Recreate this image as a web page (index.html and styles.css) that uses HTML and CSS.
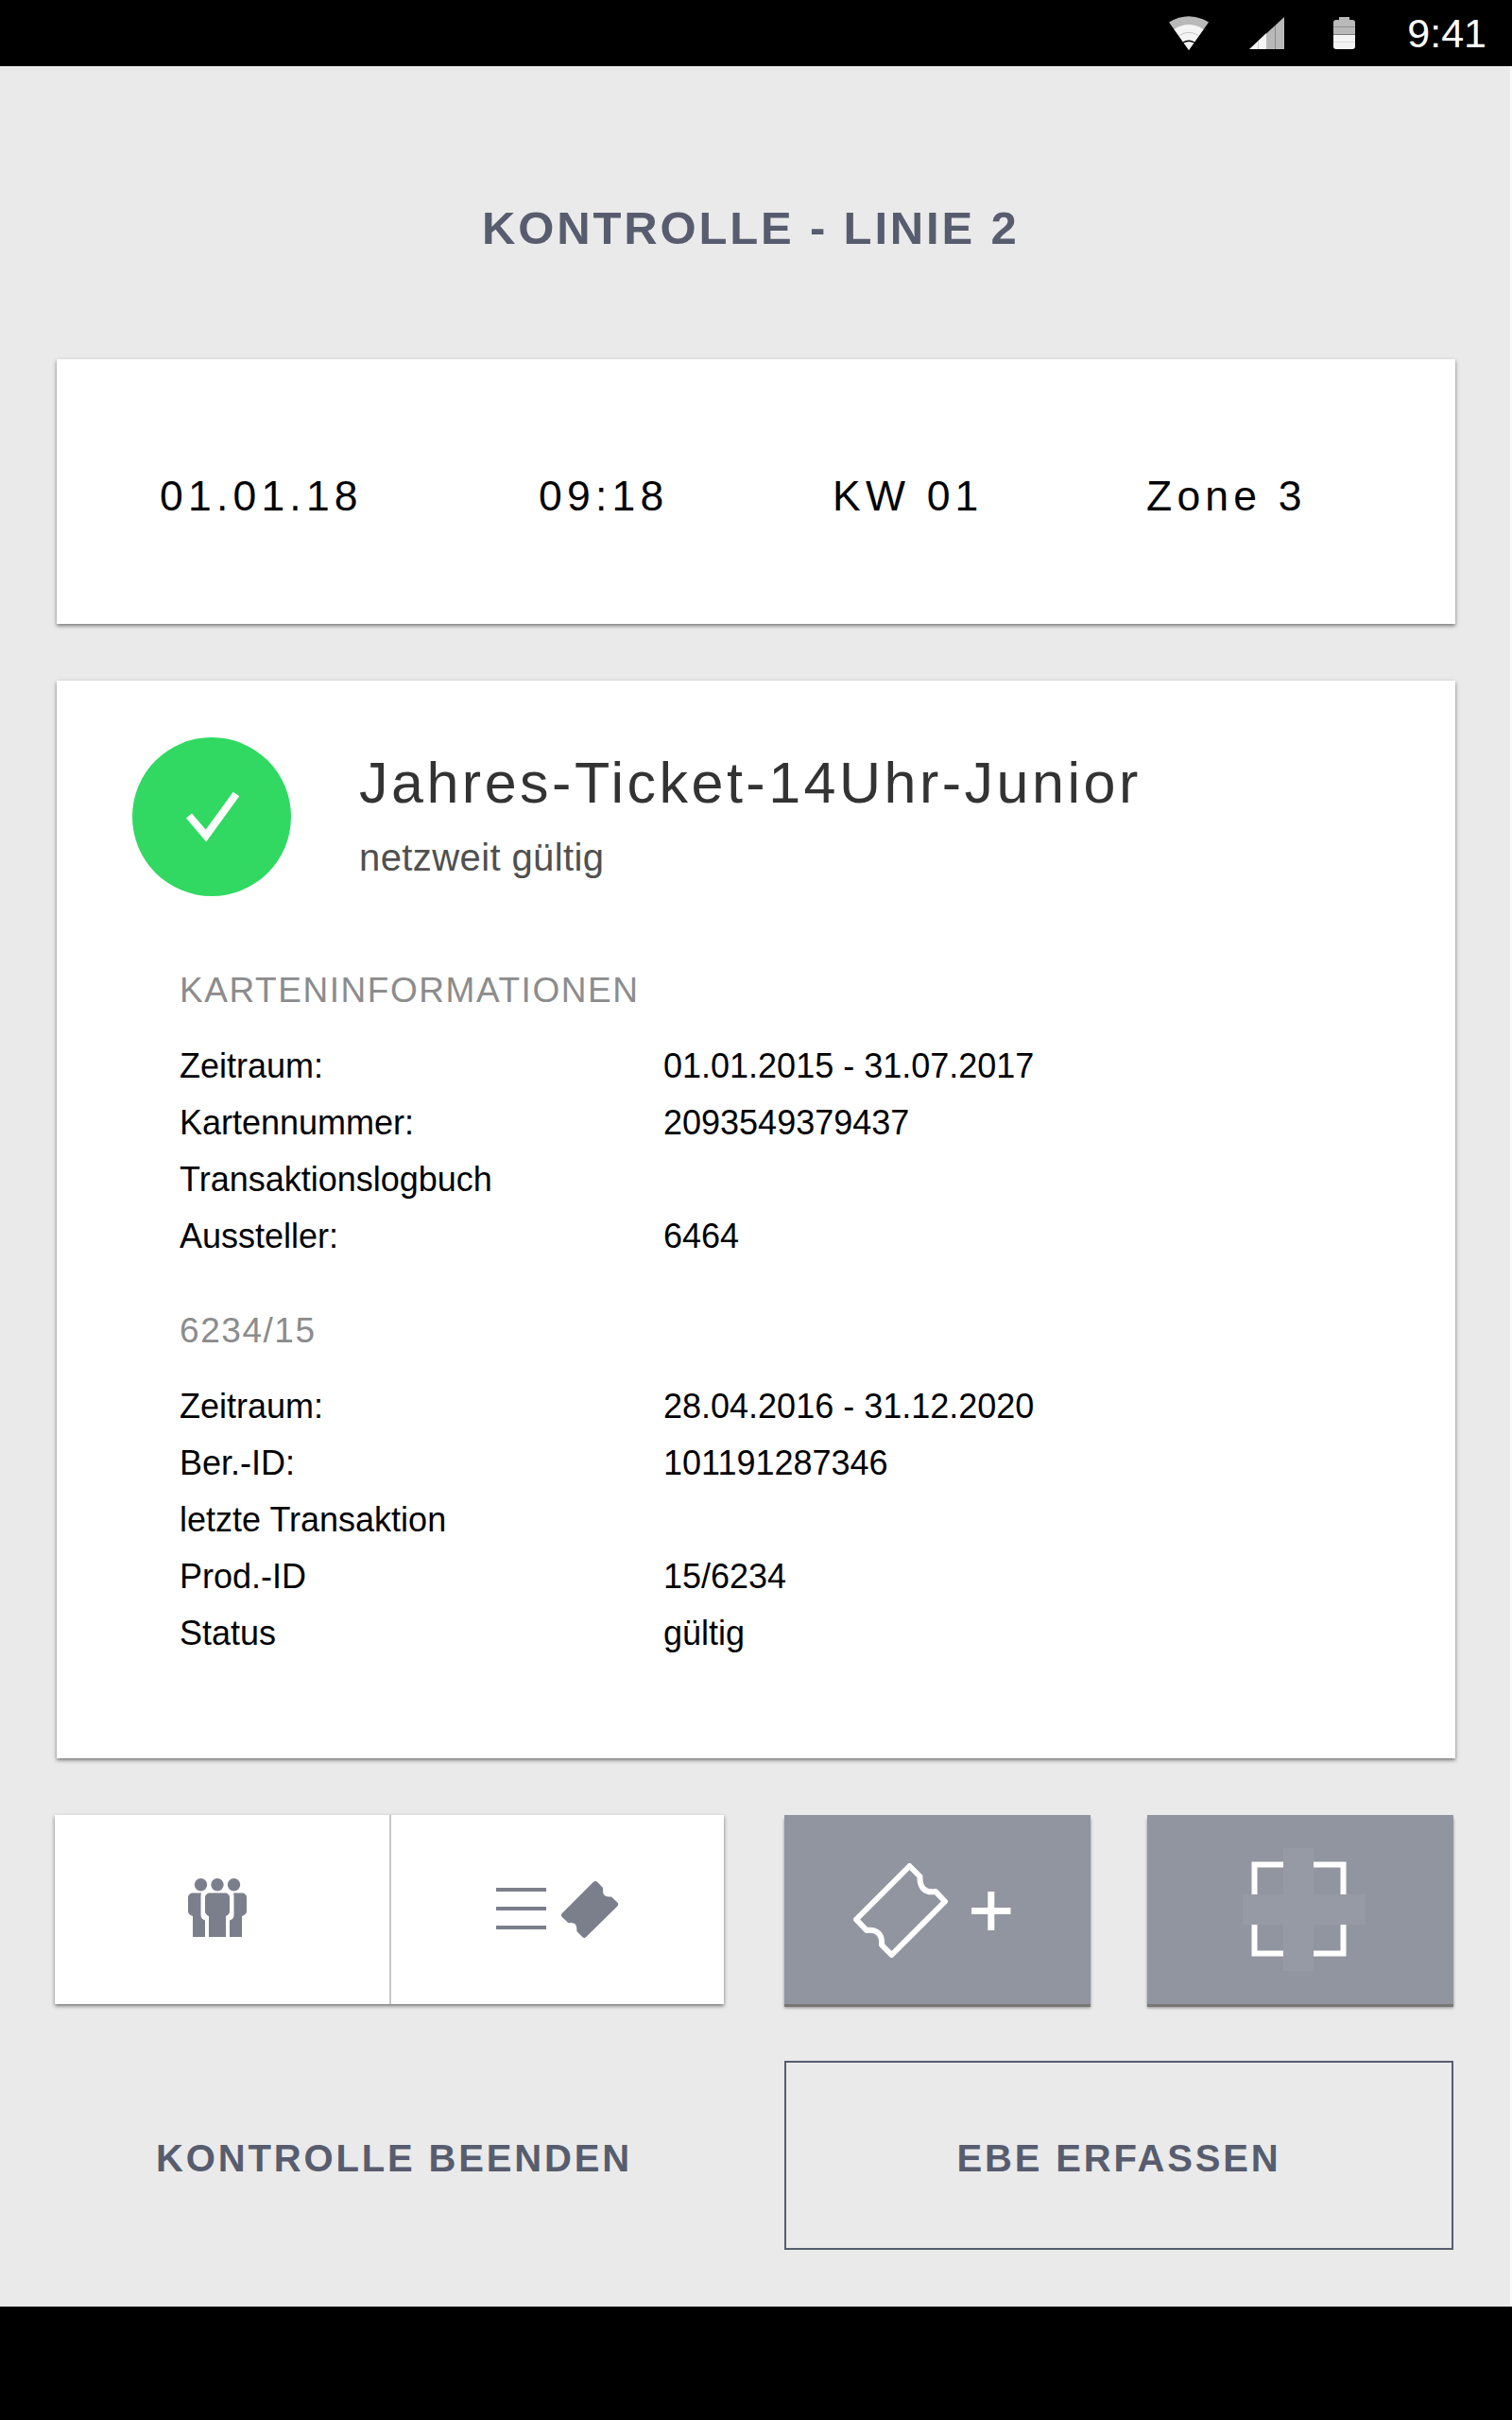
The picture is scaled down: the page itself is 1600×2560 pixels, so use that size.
FILE: index.html
```html
<!DOCTYPE html>
<html lang="de">
<head>
  <meta charset="UTF-8">
  <title>Kontrolle - Linie 2</title>
  <meta name="viewport" content="width=device-width, initial-scale=1.0">
  <link rel="stylesheet" href="styles.css">
</head>
<body>
  <div class="status-bar">
    <svg class="wifi" width="42" height="36" viewBox="0 0 42 36">
      <path fill="#b9b9b9" d="M0 6.500Q21-6 42 6.500L21 36Z"/>
      <path fill="#f4f4f4" d="M5.500 14Q21 4 36.500 14L21 36Z"/>
      <path fill="none" stroke="#c4c4c4" d="M11 20.500Q21 14 31 20.500"/>
      <path fill="none" stroke="#000" stroke-width="1.300" d="M15 28Q21 24.500 27 28"/>
    </svg>
    <svg class="signal" width="37" height="34" viewBox="0 0 37 34">
      <path fill="#f4f4f4" d="M0 34L18 17V34Z"/>
      <path fill="#b9b9b9" d="M18 17.500L37 0V34H18Z"/>
      <path stroke="#ccc" d="M9.500 25V34"/>
      <path stroke="#8a8a8a" d="M27.500 9V34"/>
    </svg>
    <svg class="battery" width="23" height="34" viewBox="0 0 23 34">
      <path fill="#b9b9b9" d="M6 0H17V3H20Q23 3 23 6V18H0V6Q0 3 3 3H6Z"/>
      <path fill="#f4f4f4" d="M0 18.500H23V31Q23 34 20 34H3Q0 34 0 31Z"/>
      <path stroke="#8f8f8f" d="M0 10.500H23"/>
      <path stroke="#ddd" d="M0 26.500H23"/>
    </svg>
    <span class="clock">9:41</span>
  </div>

  <div class="screen">
    <h1>KONTROLLE - LINIE 2</h1>

    <div class="card info">
      <span>01.01.18</span>
      <span>09:18</span>
      <span>KW 01</span>
      <span>Zone 3</span>
    </div>

    <div class="card ticket">
      <div class="ticket-head">
        <div class="valid">
          <svg width="168" height="168" viewBox="0 0 168 168">
            <path fill="none" stroke="#fff" stroke-width="8" d="M60 83L78 104L110 60"/>
          </svg>
        </div>
        <div>
          <h2>Jahres-Ticket-14Uhr-Junior</h2>
          <p class="scope">netzweit gültig</p>
        </div>
      </div>
      <div class="details">
        <h3>KARTENINFORMATIONEN</h3>
        <dl>
          <dt>Zeitraum:</dt><dd>01.01.2015 - 31.07.2017</dd>
          <dt>Kartennummer:</dt><dd>2093549379437</dd>
          <dt>Transaktionslogbuch</dt><dd></dd>
          <dt>Aussteller:</dt><dd>6464</dd>
        </dl>
        <h3>6234/15</h3>
        <dl>
          <dt>Zeitraum:</dt><dd>28.04.2016 - 31.12.2020</dd>
          <dt>Ber.-ID:</dt><dd>101191287346</dd>
          <dt>letzte Transaktion</dt><dd></dd>
          <dt>Prod.-ID</dt><dd>15/6234</dd>
          <dt>Status</dt><dd>gültig</dd>
        </dl>
      </div>
    </div>

    <div class="actions">
      <div class="group">
        <button class="light people" aria-label="Personen">
          <svg width="62" height="62" viewBox="0 0 62 62" fill="#7b7f8b">
            <circle cx="13.500" cy="6.800" r="6.700"/>
            <circle cx="31" cy="6.800" r="6.700"/>
            <circle cx="48.500" cy="6.800" r="6.700"/>
            <path d="M4 15.500H14Q13.500 17 13.500 19V39Q13.500 43 18 44.500V62H5V40Q0 38 0 35V20Q0 17 4 15.500Z"/>
            <path d="M58 15.500H48Q48.500 17 48.500 19V39Q48.500 43 44 44.500V62H57V40Q62 38 62 35V20Q62 17 58 15.500Z"/>
            <path d="M22 15.500H40Q44 17 44 20V35Q44 38 40 40V62H22V40Q18 38 18 35V20Q18 17 22 15.500Z"/>
          </svg>
        </button>
        <button class="light list" aria-label="Ticketliste">
          <svg width="130" height="60" viewBox="0 0 130 60" fill="#7b7f8b">
            <path d="M0 7H53V11H0ZM0 27H53V31H0ZM0 47H53V51H0Z"/>
            <path d="M103 .8Q105 -.8 107 .8L113 7V10Q113 17 120 16.500H122L128.300 22.500Q130 24.500 128.300 26.500L95 59.200Q93.300 60.800 91.500 59.200L85.300 53V50Q85 43 78 44L76 43.700L69.800 38Q68 36 69.800 34Z"/>
          </svg>
        </button>
      </div>
      <button class="dark add" aria-label="Ticket hinzufügen">
        <svg width="168" height="100" viewBox="0 0 168 100">
          <path fill="none" stroke="#fff" stroke-width="6" stroke-linejoin="round" d="M59.500 3L70.500 14C70 25 75 32 87 30L97 40.500L40.500 97L30 86.500C31 75 25 70 14 71L3 59.500Z"/>
          <path fill="none" stroke="#fff" stroke-width="7" d="M125 50.500H166.500M145.800 30V71"/>
        </svg>
      </button>
      <button class="dark scan" aria-label="Scannen">
        <svg width="130" height="130" viewBox="0 0 130 130">
          <path fill="#969aa4" d="M43 0H75V49H130V81H75V130H43V81H0V49H43Z"/>
          <path fill="none" stroke="#fff" stroke-width="6" d="M43 17.500H12.500V49M75 17.500H106.500V49M12.500 81V111.500H43M106.500 81V111.500H75"/>
        </svg>
      </button>
    </div>

    <div class="footer">
      <button class="text-btn plain">KONTROLLE BEENDEN</button>
      <button class="text-btn outlined">EBE ERFASSEN</button>
    </div>
  </div>
</body>
</html>
```

FILE: styles.css
```css
* {
  box-sizing: border-box;
}
body {
  margin: 0;
  width: 1600px;
  height: 2560px;
  background: #000;
  color: #000;
  font-family: 'Liberation Sans', Arial, sans-serif;
}
h1, h2, h3, p, dl, dd {
  margin: 0;
  font-weight: 400;
}
svg {
  display: block;
}
.status-bar {
  height: 70px;
  padding: 0 27px 0 0;
  display: flex;
  justify-content: flex-end;
  align-items: center;
}
.wifi {
  margin-right: 43px;
}
.signal {
  margin-right: 52px;
}
.battery {
  margin-right: 55px;
}
.clock {
  color: #fff;
  font-size: 43px;
}
.screen {
  height: 2370px;
  padding: 0 58px 0 60px;
  background: #eaeaea;
  border-right: 2px solid #fafafa;
}
h1 {
  height: 310px;
  padding: 143px 0 0 450px;
  color: #575d6e;
  font-size: 49px;
  line-height: 56px;
  font-weight: 700;
  letter-spacing: 2.85px;
}
.card {
  background: #fff;
  box-shadow: 0 2px 4px rgba(0,0,0,0.5);
}
.info {
  height: 280px;
  display: grid;
  grid-template-columns: 401px 311px 332px 1fr;
  align-items: center;
  padding: 10px 0 0 109px;
  font-size: 44.5px;
  letter-spacing: 5.2px;
}
.ticket {
  height: 1140px;
  margin-top: 60px;
  padding: 60px 80px;
}
.ticket-head {
  display: flex;
  gap: 72px;
}
.valid {
  width: 168px;
  height: 168px;
  border-radius: 50%;
  background: #31d962;
}
h2 {
  margin-top: 13px;
  color: #333;
  font-size: 61px;
  line-height: 70px;
  letter-spacing: 3.5px;
}
.scope {
  margin-top: 20px;
  color: #505050;
  font-size: 40px;
  line-height: 48px;
  letter-spacing: 0.4px;
}
.details {
  padding: 75px 0 0 50px;
}
h3 {
  height: 75px;
  color: #8c8c8c;
  font-size: 37px;
  line-height: 50px;
  letter-spacing: 1.55px;
}
dl {
  display: grid;
  grid-template-columns: 512px 1fr;
  grid-auto-rows: 60px;
  margin-bottom: 45px;
  font-size: 36px;
  line-height: 60px;
}
button {
  border: none;
  padding: 0;
  background: none;
  font-family: inherit;
}
.actions {
  display: grid;
  grid-template-columns: 712px 324px 324px;
  column-gap: 60px;
  margin: 60px -2px 0;
}
.group {
  width: 708px;
  height: 200px;
  display: flex;
  box-shadow: 0 2px 4px rgba(0,0,0,0.5);
}
.light {
  background: #fff;
}
.people {
  width: 356px;
  padding: 0 0 4px 141px;
  border-right: 2px solid #c8c8c8;
}
.list {
  width: 352px;
  padding-left: 111px;
}
.dark {
  height: 200px;
  background: #9195a0;
  box-shadow: 0 3px 0 #777, 0 4px 3px rgba(0,0,0,0.4);
}
.add {
  padding: 2px 0 0 73px;
}
.scan {
  padding-left: 101px;
}
.footer {
  display: grid;
  grid-template-columns: 708px 708px;
  column-gap: 64px;
  margin: 60px -2px 0;
}
.text-btn {
  height: 200px;
  padding-top: 7px;
  color: #575d6e;
  font-size: 40px;
  font-weight: 700;
  letter-spacing: 2.85px;
}
.plain {
  padding-left: 10px;
}
.outlined {
  border: 2px solid #575d6e;
}
```
